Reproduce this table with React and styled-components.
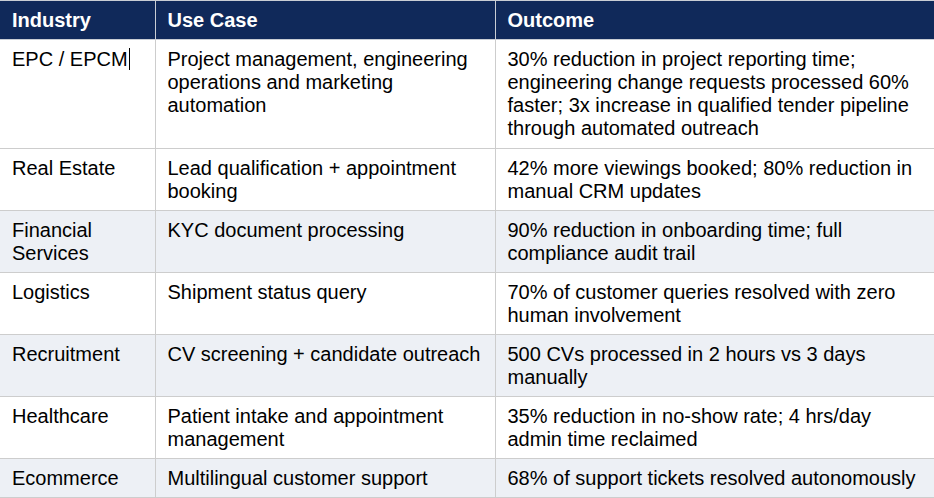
import React from 'react';
import styled, { createGlobalStyle } from 'styled-components';

const Global = createGlobalStyle`
  html, body { margin: 0; padding: 0; background: #fff; }
  body { font-family: "Liberation Sans", Arial, sans-serif; }
`;

const Table = styled.table`
  width: 934px;
  border-collapse: collapse;
  table-layout: fixed;
  font-size: 20px;
  line-height: 23px;
  color: #000;
`;

const Col = styled.col`
  width: ${p => p.w}px;
`;

const Head = styled.th`
  background: #10295a;
  color: #fff;
  font-weight: bold;
  text-align: left;
  padding: 8px 12px 7px;
  border: 1px solid #c9cdd4;
  border-left: none;
`;

const Row = styled.tr`
  background: ${p => (p.shade ? '#edf0f5' : '#fff')};
`;

const Cell = styled.td`
  vertical-align: top;
  padding: 8px 12px ${p => (p.tall ? 8 : 7)}px;
  border: 1px solid #cdcdcd;
  border-left: ${p => (p.first ? 'none' : '1px solid #cdcdcd')};
`;

const Caret = styled.span`
  display: inline-block;
  width: 1px;
  height: 22px;
  background: #000;
  vertical-align: -4px;
  margin-left: 1px;
`;

const rows = [
  ['EPC / EPCM', 'Project management, engineering operations and marketing automation', '30% reduction in project reporting time; engineering change requests processed 60% faster; 3x increase in qualified tender pipeline through automated outreach', false],
  ['Real Estate', 'Lead qualification + appointment booking', '42% more viewings booked; 80% reduction in manual CRM updates', false],
  ['Financial Services', 'KYC document processing', '90% reduction in onboarding time; full compliance audit trail', true],
  ['Logistics', 'Shipment status query', '70% of customer queries resolved with zero human involvement', false],
  ['Recruitment', 'CV screening + candidate outreach', '500 CVs processed in 2 hours vs 3 days manually', true],
  ['Healthcare', 'Patient intake and appointment management', '35% reduction in no-show rate; 4 hrs/day admin time reclaimed', false],
  ['Ecommerce', 'Multilingual customer support', '68% of support tickets resolved autonomously', true],
];

export default function App() {
  return (
    <>
      <Global />
      <Table>
        <colgroup>
          <Col w={155} />
          <Col w={340} />
          <Col w={439} />
        </colgroup>
        <thead>
          <tr>
            <Head>Industry</Head>
            <Head>Use Case</Head>
            <Head>Outcome</Head>
          </tr>
        </thead>
        <tbody>
          {rows.map(([ind, use, out, shade], i) => (
            <Row key={ind} shade={shade}>
              <Cell first tall={i === 0}>
                {ind}
                {i === 0 && <Caret />}
              </Cell>
              <Cell tall={i === 0}>{use}</Cell>
              <Cell tall={i === 0}>{out}</Cell>
            </Row>
          ))}
        </tbody>
      </Table>
    </>
  );
}
